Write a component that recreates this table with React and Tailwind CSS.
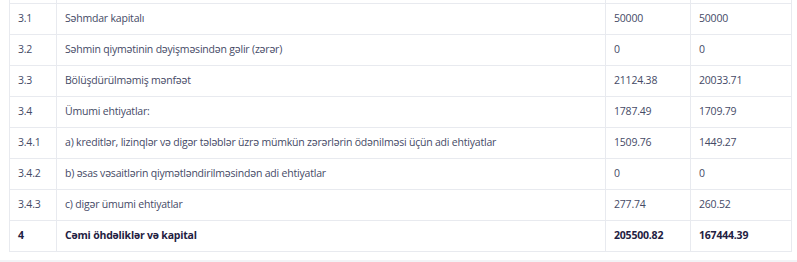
import React from "react";

const rows = [
  { code: "3.1", name: "Səhmdar kapitalı", a: "50000", b: "50000" },
  { code: "3.2", name: "Səhmin qiymətinin dəyişməsindən gəlir (zərər)", a: "0", b: "0" },
  { code: "3.3", name: "Bölüşdürülməmiş mənfəət", a: "21124.38", b: "20033.71" },
  { code: "3.4", name: "Ümumi ehtiyatlar:", a: "1787.49", b: "1709.79" },
  {
    code: "3.4.1",
    name: "a) kreditlər, lizinqlər və digər tələblər üzrə mümkün zərərlərin ödənilməsi üçün adi ehtiyatlar",
    a: "1509.76",
    b: "1449.27",
  },
  { code: "3.4.2", name: "b) əsas vəsaitlərin qiymətləndirilməsindən adi ehtiyatlar", a: "0", b: "0" },
  { code: "3.4.3", name: "c) digər ümumi ehtiyatlar", a: "277.74", b: "260.52" },
  { code: "4", name: "Cəmi öhdəliklər və kapital", a: "205500.82", b: "167444.39", bold: true },
];

const App = () => {
  return (
    <div
      className="w-[797px] h-[262px] overflow-hidden bg-white"
      style={{ fontFamily: '"Open Sans", "Noto Sans", sans-serif' }}
    >
      <div className="pl-[9px] pr-[6px] pb-[8px]">
        <table className="w-[782px] table-fixed border-collapse text-[10.5px] tracking-[-0.2px] text-[#454a66]">
          <colgroup>
            <col className="w-[47px]" />
            <col className="w-[549px]" />
            <col className="w-[85px]" />
            <col className="w-[101px]" />
          </colgroup>
          <tbody>
            {/* tail of the row above, cut off by the screenshot */}
            <tr className="h-[3px]">
              <td className="border-x border-b border-[#e8eaef] p-0" />
              <td className="border-x border-b border-[#e8eaef] p-0" />
              <td className="border-x border-b border-[#e8eaef] p-0" />
              <td className="border-x border-b border-[#e8eaef] p-0" />
            </tr>
            {rows.map((r) => (
              <tr
                key={r.code}
                className={`h-[31px] ${r.bold ? "font-bold text-[#1f2142]" : ""}`}
              >
                <td className="border border-[#e8eaef] pl-[8px] align-middle">{r.code}</td>
                <td className="border border-[#e8eaef] pl-[8px] align-middle whitespace-nowrap">{r.name}</td>
                <td className="border border-[#e8eaef] pl-[8px] align-middle">{r.a}</td>
                <td className="border border-[#e8eaef] pl-[8px] align-middle">{r.b}</td>
              </tr>
            ))}
          </tbody>
        </table>
      </div>
      <div className="h-[10px] bg-[#f2f3f6]" />
    </div>
  );
};

export default App;
